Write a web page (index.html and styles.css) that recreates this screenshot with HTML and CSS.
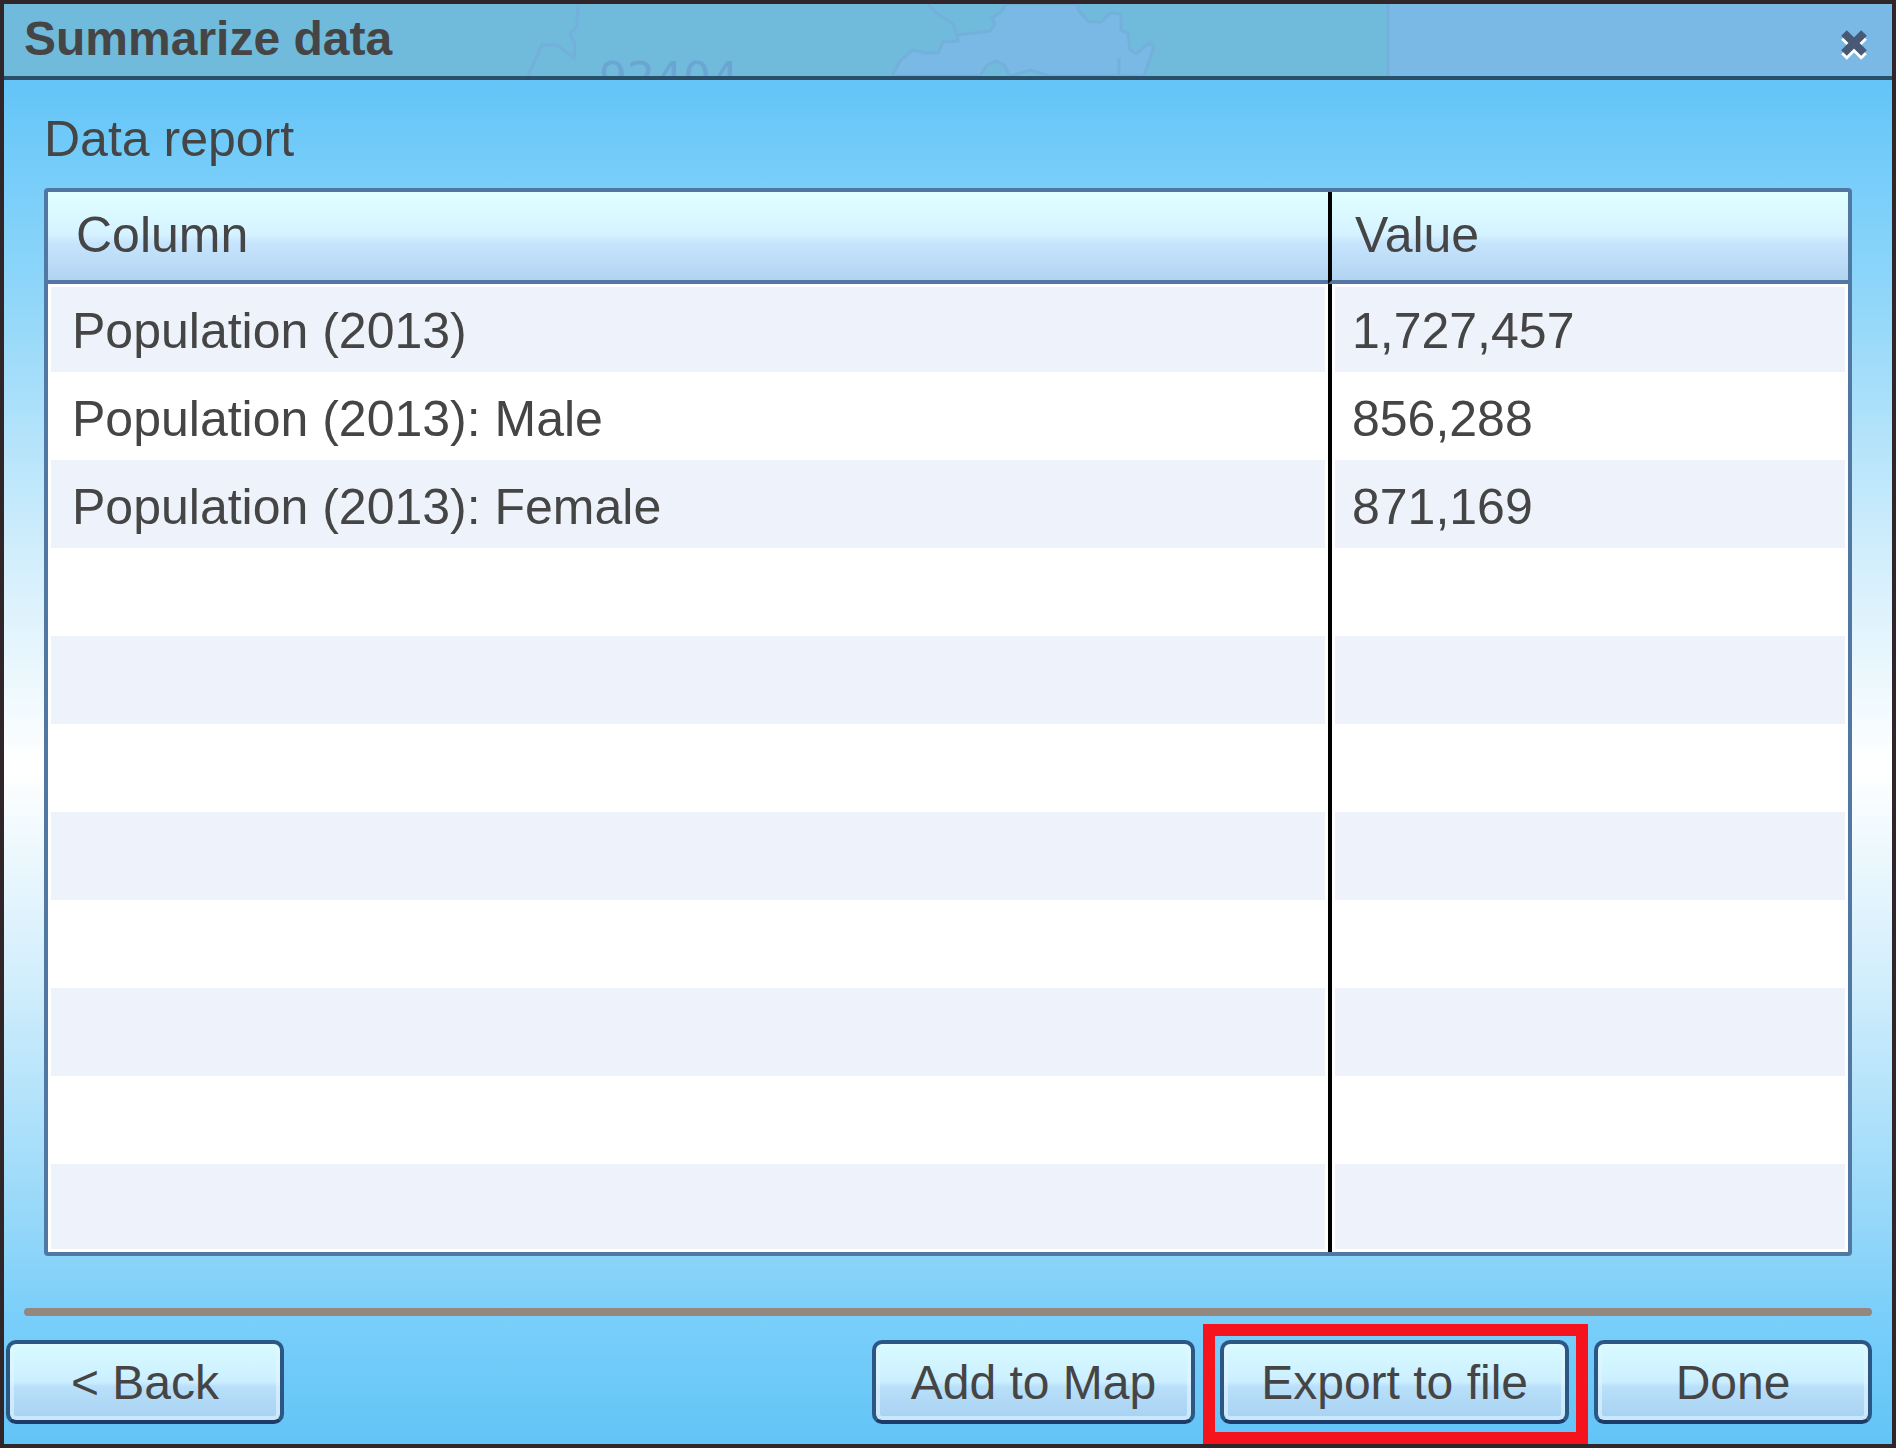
FILE: index.html
```html
<!DOCTYPE html>
<html lang="en">
<head>
<meta charset="utf-8">
<title>Summarize data</title>
<link rel="stylesheet" href="styles.css">
</head>
<body>
<main class="dialog">
  <header class="titlebar">
    <svg class="map" width="1388" height="72" viewBox="4 4 1388 72" aria-hidden="true">
      <rect x="4" y="4" width="1384" height="72" fill="#70badb"/>
      <path class="water" d="M1006 4L1002 11L992 18L995 24L990 31L957 35L958 41L943 42L938 53L925 53L913 50L900 61L892 76H980L987 65L996 61L1004 65L1010 76L1030 70L1050 76H1144L1154 47L1149 43L1136 54L1130 50L1128 34L1121 30L1121 14L1110 13L1101 22L1089 22L1078 10V4Z"/>
      <path class="line" d="M578 4L577 26L570 34L575 44L574 58L557 45H542L528 76M928 4L935 12L953 24L957 35M1119 58V76M1388 4V76"/>
      <text x="599" y="94" class="zip">92404</text>
    </svg>
    <h1 class="title">Summarize data</h1>
    <button class="close" type="button" aria-label="Close">
      <svg width="32" height="42" viewBox="0 0 32 42" aria-hidden="true">
        <path d="M6 12L26 32M26 12L6 32" stroke="#fff"/>
        <path d="M6 8L26 28M26 8L6 28" stroke="#475a75"/>
      </svg>
    </button>
  </header>
  <section class="content">
    <h2 class="label" id="report-label">Data report</h2>
    <table class="report" aria-labelledby="report-label">
      <colgroup><col><col class="value-col"></colgroup>
      <thead><tr><th scope="col">Column</th><th scope="col">Value</th></tr></thead>
      <tbody>
        <tr><td>Population (2013)</td><td>1,727,457</td></tr>
        <tr><td>Population (2013): Male</td><td>856,288</td></tr>
        <tr><td>Population (2013): Female</td><td>871,169</td></tr>
        <tr><td></td><td></td></tr>
        <tr><td></td><td></td></tr>
        <tr><td></td><td></td></tr>
        <tr><td></td><td></td></tr>
        <tr><td></td><td></td></tr>
        <tr><td></td><td></td></tr>
        <tr><td></td><td></td></tr>
        <tr><td></td><td></td></tr>
      </tbody>
    </table>
  </section>
  <footer class="footer">
    <hr class="rule">
    <div class="actions">
      <button class="btn back" type="button">&lt; Back</button>
      <button class="btn add" type="button">Add to Map</button>
      <button class="btn export" type="button">Export to file</button>
      <button class="btn" type="button">Done</button>
    </div>
  </footer>
</main>
</body>
</html>
```
FILE: styles.css
```css
* { box-sizing: border-box; }

body {
  margin: 0;
  font-family: "Liberation Sans", Arial, sans-serif;
  font-size: 50px;
  line-height: 56px;
  color: #454545;
}

.dialog {
  display: flex;
  flex-direction: column;
  min-height: 100vh;
  border: 4px solid #30262a;
  background: linear-gradient(#63c4f7 76px, #7acffa 13%, #92d7f9 21%, #d4effc 39%, #fff 53%, #d4effc 67%, #97d8f9 84%, #7acffa 91%, #62c4f6);
}

.titlebar {
  position: relative;
  display: flex;
  justify-content: space-between;
  align-items: flex-start;
  height: 76px;
  padding: 7px 22px 0 20px;
  overflow: hidden;
  background: #7ab9e5;
  border-bottom: 4px solid #2a4f69;
}

.map { position: absolute; left: 0; top: 0; }
.water { fill: #7ab9e5; stroke: #74b0dc; stroke-width: 3; }
.line { fill: none; stroke: #74b0dc; stroke-width: 3; }
.zip { font-family: "DejaVu Sans", sans-serif; font-size: 44px; fill: #6aa5d3; }

.title {
  position: relative;
  margin: 0;
  font-size: 48px;
  line-height: 56px;
}

.close {
  padding: 0;
  border: 0;
  background: none;
  line-height: 0;
  margin-top: 14px;
}
.close path { stroke-width: 8; fill: none; }

.content { padding: 31px 40px 0; }

.label { margin: 0 0 21px; font-weight: 400; font-size: 50px; line-height: 56px; }

.report {
  width: 100%;
  table-layout: fixed;
  border: 4px solid #5078a3;
  border-radius: 4px;
  border-spacing: 0;
  background: #fff;
}
.value-col { width: 520px; }

th, td { text-align: left; font-weight: 400; }
td { height: 88px; padding: 6px 20px 0 24px; }
th {
  height: 92px;
  padding: 0 24px 2px 28px;
  border-bottom: 4px solid #5078a3;
  background: linear-gradient(#e0ffff, #d5f3ff 48%, #c6e4fc 58%, #b2d4f2);
}
th + th, td + td { border-left: 4px solid #000; }
td + td { padding-left: 20px; }
th + th { padding-left: 23px; }
tbody tr:nth-child(odd) td { background: #eef3fb; box-shadow: inset 3px 0 #fff, inset -3px 0 #fff; }
tbody tr:first-child td { box-shadow: inset 3px 3px #fff, inset -3px 0 #fff; }
tbody tr:last-child td { box-shadow: inset 3px 0 #fff, inset -3px -3px #fff; }

.footer { margin-top: auto; padding: 0 20px 20px; }

.rule { height: 8px; margin: 0 0 24px; border: 0; border-radius: 4px; background: #94877f; }

.actions { display: flex; gap: 25px; margin-left: -18px; }

.btn {
  position: relative;
  height: 84px;
  min-width: 278px;
  padding: 2px 35px 0;
  border: 4px solid #2c5684;
  border-bottom-color: #1d3b68;
  border-radius: 10px;
  background: linear-gradient(#d8fbff, #cbefff 50%, #b9e0fa 56%, #a6d1f1);
  box-shadow: inset 0 0 0 4px #e2f6ff99;
  font: 48px/56px "Liberation Sans", Arial, sans-serif;
  color: #454545;
  white-space: nowrap;
}
.back { margin-right: auto; }
.export { padding: 2px 37px 0; }

.export::after {
  content: "";
  position: absolute;
  inset: -20px -23px -24px -21px;
  border: 12px solid #f5141d;
}
```
